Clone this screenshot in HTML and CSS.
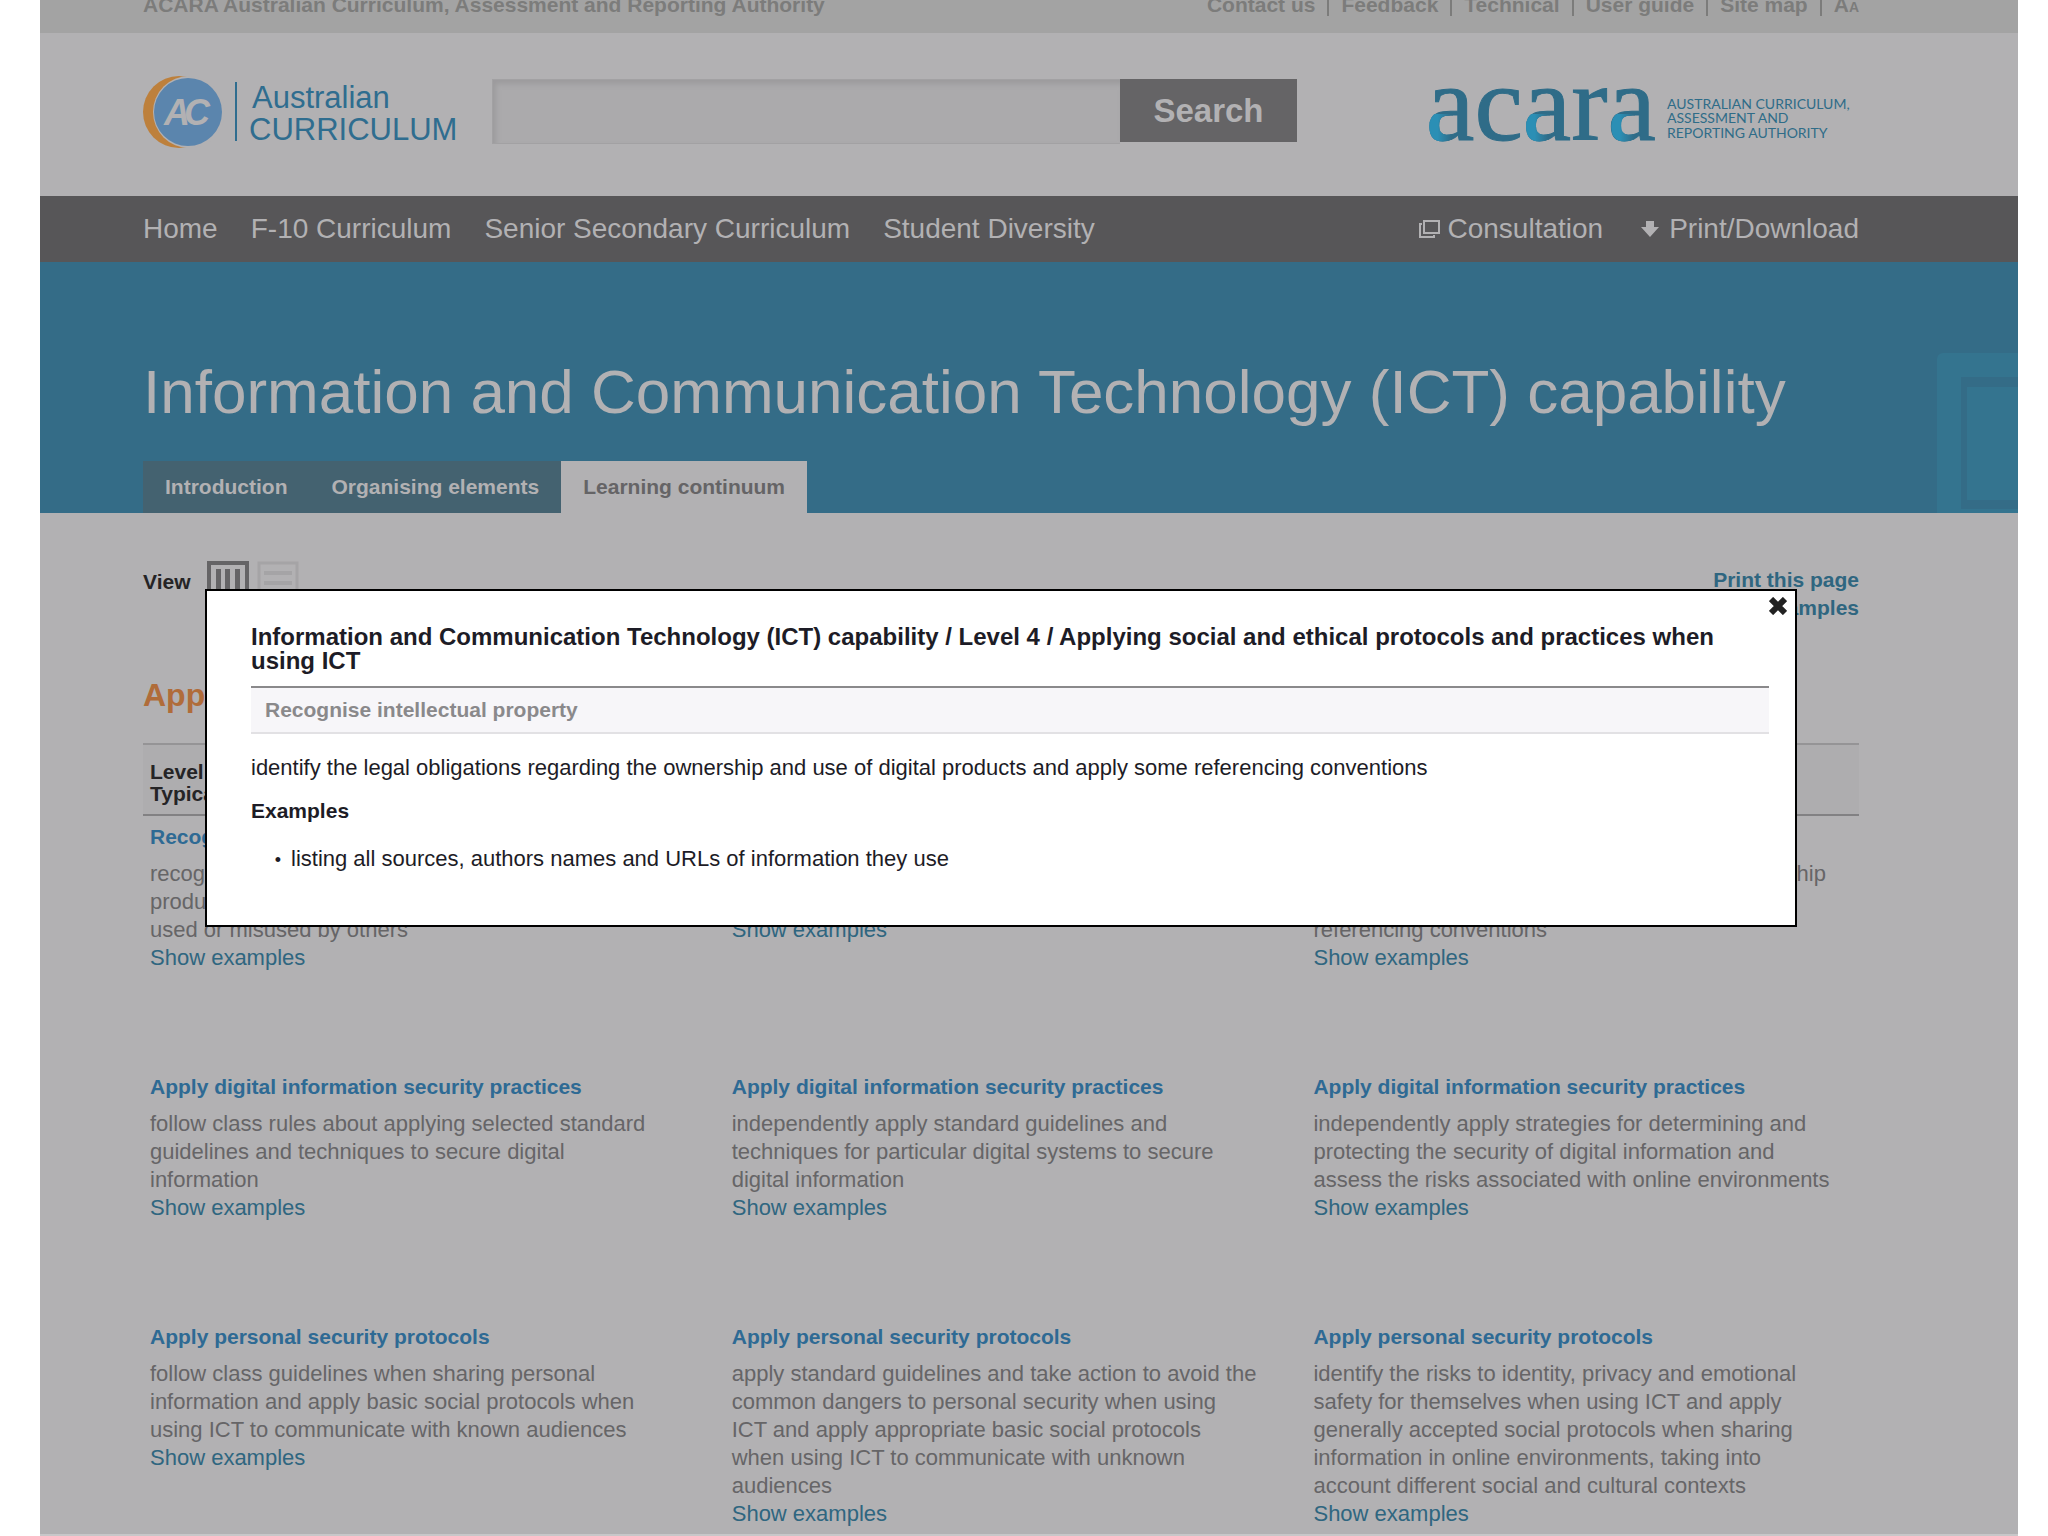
FILE: index.html
```
<!DOCTYPE html>
<html lang="en">
<head>
    <meta charset="UTF-8">
    <title>Information and Communication Technology (ICT) capability</title>
    <link rel="stylesheet" href="styles.css">
</head>
<body>
<div class="page">
    <div class="topbar inner">
        <span>ACARA Australian Curriculum, Assessment and Reporting Authority</span>
        <div class="toplinks">
            <a href="#">Contact us</a><i></i>
            <a href="#">Feedback</a><i></i>
            <a href="#">Technical</a><i></i>
            <a href="#">User guide</a><i></i>
            <a href="#">Site map</a><i></i>
            <a href="#" class="textsize">A<small>A</small></a>
        </div>
    </div>

    <div class="header inner">
        <a href="#" class="logo" aria-label="Australian Curriculum">
            <svg width="320" height="76" viewBox="0 0 320 76">
                <circle cx="36" cy="38" r="36" fill="#bd803c"/>
                <circle cx="46" cy="38" r="36" fill="#b2b1b3"/>
                <circle cx="45" cy="38" r="34" fill="#5b85ad"/>
                <text x="21 41" y="51" class="logo-ac">AC</text>
                <rect x="92" y="8" width="2" height="59" fill="#2f6d8f"/>
                <text x="109" y="34" class="logo-text">Australian</text>
                <text x="106" y="66" class="logo-text">CURRICULUM</text>
            </svg>
        </a>
        <form class="search" onsubmit="return false">
            <input type="text" aria-label="Search">
            <button type="submit">Search</button>
        </form>
        <a href="#" class="acara" aria-label="ACARA">
            <svg width="430" height="76" viewBox="0 0 430 76">
                <defs>
                    <!-- lighter colour for the bowls of the three a's -->
                    <linearGradient id="bowl" gradientUnits="userSpaceOnUse" x1="-3" y1="0" x2="94" y2="0" spreadMethod="repeat">
                        <stop offset="0" stop-color="#2b8fb5"/>
                        <stop offset="0.12" stop-color="#2b8fb5"/>
                        <stop offset="0.26" stop-color="#2f6c88"/>
                        <stop offset="1" stop-color="#2f6c88"/>
                    </linearGradient>
                    <clipPath id="bowls">
                        <path d="M-4 40h28v30H-4zM93 40h28v30H93z"/>
                    </clipPath>
                    <linearGradient id="bowlLast" gradientUnits="userSpaceOnUse" x1="179" y1="0" x2="205" y2="0">
                        <stop offset="0.45" stop-color="#2b8fb5"/>
                        <stop offset="1" stop-color="#2f6c88"/>
                    </linearGradient>
                    <clipPath id="bowlsLast">
                        <path d="M178 40h28v30h-28z"/>
                    </clipPath>
                </defs>
                <text x="-3" y="66" class="acara-word">acara</text>
                <text x="-3" y="66" class="acara-word" style="fill:url(#bowl);stroke:url(#bowl)" clip-path="url(#bowls)" aria-hidden="true">aca</text>
                <text x="179" y="66" class="acara-word" style="fill:url(#bowlLast);stroke:url(#bowlLast)" clip-path="url(#bowlsLast)" aria-hidden="true">a</text>
                <text x="238" y="35" class="acara-sub">AUSTRALIAN CURRICULUM,</text>
                <text x="238" y="49" class="acara-sub">ASSESSMENT AND</text>
                <text x="238" y="64" class="acara-sub">REPORTING AUTHORITY</text>
            </svg>
        </a>
    </div>

    <div class="nav inner">
        <a href="#">Home</a>
        <a href="#">F-10 Curriculum</a>
        <a href="#">Senior Secondary Curriculum</a>
        <a href="#">Student Diversity</a>
        <a href="#" class="nav-right">
            <svg width="21" height="18" viewBox="0 0 21 18" fill="none" stroke="#b2b1b3" stroke-width="2">
                <path d="M5 1h15v12H5z"/>
                <path d="M3 4H1v13h14v-2"/>
            </svg>
            Consultation
        </a>
        <a href="#">
            <svg width="18" height="16" viewBox="0 0 18 16" fill="#b2b1b3">
                <path d="M5 0h8v6h5l-9 10L0 6h5z"/>
            </svg>
            Print/Download
        </a>
    </div>

    <div class="hero inner">
        <div class="hero-shape"></div>
        <h1>Information and Communication Technology (ICT) capability</h1>
        <div class="tabs">
            <a href="#">Introduction</a>
            <a href="#">Organising elements</a>
            <a href="#" class="active">Learning continuum</a>
        </div>
    </div>

    <div class="content inner">
        <div class="tools">
            <div class="view">
                <span>View</span>
                <button type="button" aria-label="Column view">
                    <svg width="42" height="42" viewBox="0 0 42 42">
                        <path d="M2 2h38v38H2z" fill="none" stroke="#656466" stroke-width="4"/>
                        <path d="M9 8h5v26H9zM18 8h5v26h-5zM28 8h5v26h-5z" fill="#656466"/>
                    </svg>
                </button>
                <button type="button" aria-label="List view">
                    <svg width="42" height="42" viewBox="0 0 42 42">
                        <path d="M2 2h38v38H2z" fill="none" stroke="#a5a4a6" stroke-width="3"/>
                        <path d="M7 10h28v4H7zM7 20h28v4H7zM7 30h28v4H7z" fill="#a5a4a6"/>
                    </svg>
                </button>
            </div>
            <div class="actions">
                <a href="#">Print this page</a>
                <a href="#">Show examples</a>
            </div>
        </div>

        <h2>Applying social and ethical protocols and practices when using ICT</h2>

        <table>
            <thead>
            <tr>
                <th>Level 2<br>Typically by the end of Year 2</th>
                <th>Level 3<br>Typically by the end of Year 4</th>
                <th>Level 4<br>Typically by the end of Year 6</th>
            </tr>
            </thead>
            <tbody>
            <tr>
                <td>
                    <h3>Recognise intellectual property</h3>
                    <p>recognise ownership of digital products that others produce and that what they create may be<br>used or misused by others</p>
                    <a href="#">Show examples</a>
                </td>
                <td>
                    <h3>Recognise intellectual property</h3>
                    <p>acknowledge when they use digital products created by someone else</p>
                    <a href="#">Show examples</a>
                </td>
                <td>
                    <h3>Recognise intellectual property</h3>
                    <p>identify the legal obligations regarding the ownership and use of digital products and apply some<br>referencing conventions</p>
                    <a href="#">Show examples</a>
                </td>
            </tr>
            <tr>
                <td>
                    <h3>Apply digital information security practices</h3>
                    <p>follow class rules about applying selected standard guidelines and techniques to secure digital information</p>
                    <a href="#">Show examples</a>
                </td>
                <td>
                    <h3>Apply digital information security practices</h3>
                    <p>independently apply standard guidelines and techniques for particular digital systems to secure digital information</p>
                    <a href="#">Show examples</a>
                </td>
                <td>
                    <h3>Apply digital information security practices</h3>
                    <p>independently apply strategies for determining and protecting the security of digital information and assess the risks associated with online environments</p>
                    <a href="#">Show examples</a>
                </td>
            </tr>
            <tr>
                <td>
                    <h3>Apply personal security protocols</h3>
                    <p>follow class guidelines when sharing personal information and apply basic social protocols when using ICT to communicate with known audiences</p>
                    <a href="#">Show examples</a>
                </td>
                <td>
                    <h3>Apply personal security protocols</h3>
                    <p>apply standard guidelines and take action to avoid the common dangers to personal security when using<br>ICT and apply appropriate basic social protocols when using ICT to communicate with unknown audiences</p>
                    <a href="#">Show examples</a>
                </td>
                <td>
                    <h3>Apply personal security protocols</h3>
                    <p>identify the risks to identity, privacy and emotional safety for themselves when using ICT and apply generally accepted social protocols when sharing information in online environments, taking into account different social and cultural contexts</p>
                    <a href="#">Show examples</a>
                </td>
            </tr>
            </tbody>
        </table>
    </div>

    <!-- examples popup -->
    <div class="popup" role="dialog" aria-labelledby="popupTitle">
        <button type="button" class="close" aria-label="Close">
            <svg width="18" height="18" viewBox="0 0 18 18" stroke="#222" stroke-width="6">
                <path d="M2 2l14 14M16 2L2 16"/>
            </svg>
        </button>
        <h2 id="popupTitle">Information and Communication Technology (ICT) capability / Level 4 / Applying social and ethical protocols and practices when using ICT</h2>
        <h3>Recognise intellectual property</h3>
        <p>identify the legal obligations regarding the ownership and use of digital products and apply some referencing conventions</p>
        <h4>Examples</h4>
        <ul>
            <li>listing all sources, authors names and URLs of information they use</li>
        </ul>
    </div>
</div>
</body>
</html>
```
FILE: styles.css
```
*{box-sizing: border-box;}
body{
    margin:0;background: #fff;
    font-family: "Liberation Sans", Arial, sans-serif;
    font-size:22px;line-height:28px;color:#666567;
}
a{color:inherit;text-decoration: none;}
h1,h2,h3,h4,p,ul{margin:0;}
svg{display: block;}
button{border:0;padding:0;background: none;font-family: inherit;cursor: pointer;}
.page{
    margin:0 30px 0 40px;position: relative;overflow: hidden;
    background: #b2b1b3;border-bottom:2px solid #c8c7c9;
}
.inner{padding:0 159px 0 103px;}

/* top bar */
.topbar{
    display: flex;justify-content: space-between;
    height:40px;margin-top:-7px;background: #a3a3a3;
    color:#7c7c7b;font-size:21px;font-weight: bold;line-height:24px;
}
.toplinks{display: flex;}
.toplinks i{
    width:2px;height:20px;margin:3px 12px 0;background: #7c7c7b;
}
.textsize small{font-size:14px;}

/* header */
.header{
    display: flex;align-items: flex-start;
    height:163px;padding-top:41px;
}
.logo{width:349px;}
.logo-ac{font-size:36px;font-weight: bold;font-style: italic;fill:#b2b1b3;}
.logo-text{font-size:31px;fill:#2f6d8f;}
.search{display: flex;flex:0 1 805px;margin-top:5px;}
.search input{
    flex:1;min-width:0;height:65px;padding:0 16px;font-size:28px;
    background: #abaaac;border:1px solid #a2a1a3;border-right:0;
    box-shadow: inset 3px 4px 5px #9c9b9d;
}
.search button{
    width:177px;height:63px;background: #656466;color:#b2b1b3;
    font-size:33px;font-weight: bold;
}
.acara{margin-left:auto;}
.acara-word{
    font-family: "Liberation Serif", serif;font-size:109px;
    fill:#2f6c88;stroke:#2f6c88;stroke-width:1px;
}
.acara-sub{font-family: Lato, sans-serif;font-size:14px;fill:#2f6c88;}

/* nav */
.nav{
    display: flex;align-items: center;gap:33px;
    height:66px;background: #575658;color:#b2b1b3;font-size:28px;
}
.nav a{display: flex;align-items: center;gap:10px;}
.nav .nav-right{margin:0 5px 0 auto;gap:7px;}

/* title and tabs */
.hero{
    position: relative;overflow: hidden;
    padding-top:95px;background: #346c87;color:#b2b1b3;
}
.hero h1{font-size:62px;line-height:70px;font-weight: normal;}
.hero-shape{
    position: absolute;right:-60px;bottom:-20px;
    width:141px;height:180px;
    border:24px solid #34748f;border-radius:6px;
}
.hero-shape:after{
    content:"";position: absolute;
    left:6px;right:6px;top:10px;bottom:9px;background: #34748f;
}
.tabs{display: flex;margin-top:34px;}
.tabs a{
    height:52px;padding:0 22px;line-height:52px;
    font-size:21px;font-weight: bold;background: #446270;
}
.tabs .active{background: #b2b1b3;color:#656466;}

/* content */
.content{padding-top:48px;}
.tools{display: flex;justify-content: space-between;align-items: flex-start;}
.view{display: flex;align-items: center;gap:8px;color:#252426;font-size:21px;font-weight: bold;}
.view span{margin-right:9px;}
.actions{
    display: flex;flex-direction: column;align-items: flex-end;
    padding-top:5px;
    color:#2f6680;font-size:21px;font-weight: bold;
}
.content h2{
    margin:55px 0 30px;
    font-size:32px;line-height:36px;color:#b06c3a;
}
table{width:100%;border-collapse: separate;border-spacing:0;table-layout: fixed;}
th,td{
    padding:7px 48px 0 7px;text-align: left;vertical-align: top;
}
th:last-child,td:last-child{width:32.2%;padding-right:21px;}
th{
    padding-top:16px;padding-bottom:9px;
    border-top:2px solid #959496;border-bottom:2px solid #828183;
    background: #aeadaf;color:#252426;font-size:21px;line-height:22px;
}
td{height:250px;}
tr:last-child td{height:218px;}
td h3{margin-bottom:9px;font-size:21px;line-height:28px;color:#2e6a94;}
td a{color:#2f6680;}

/* popup */
.popup{
    position: absolute;left:165px;right:221px;top:589px;
    padding:34px 26px 52px 44px;
    background: #fff;border:2px solid #000;color:#1d1c26;
}
.close{position: absolute;top:6px;right:8px;}
.popup h2{
    padding:0 40px 13px 0;border-bottom:2px solid #8a898b;
    font-size:24px;line-height:24px;
}
.popup h3{
    padding:8px 14px;background: #f7f6f9;border-bottom:2px solid #e2e1e4;
    color:#8a898b;font-size:21px;line-height:28px;
}
.popup p{margin-top:20px;}
.popup h4{margin-top:15px;font-size:21px;line-height:28px;}
.popup ul{margin-top:20px;padding-left:40px;list-style-type:"•\00a0\00a0";}
.popup li::marker{font-size:18px;}
```
